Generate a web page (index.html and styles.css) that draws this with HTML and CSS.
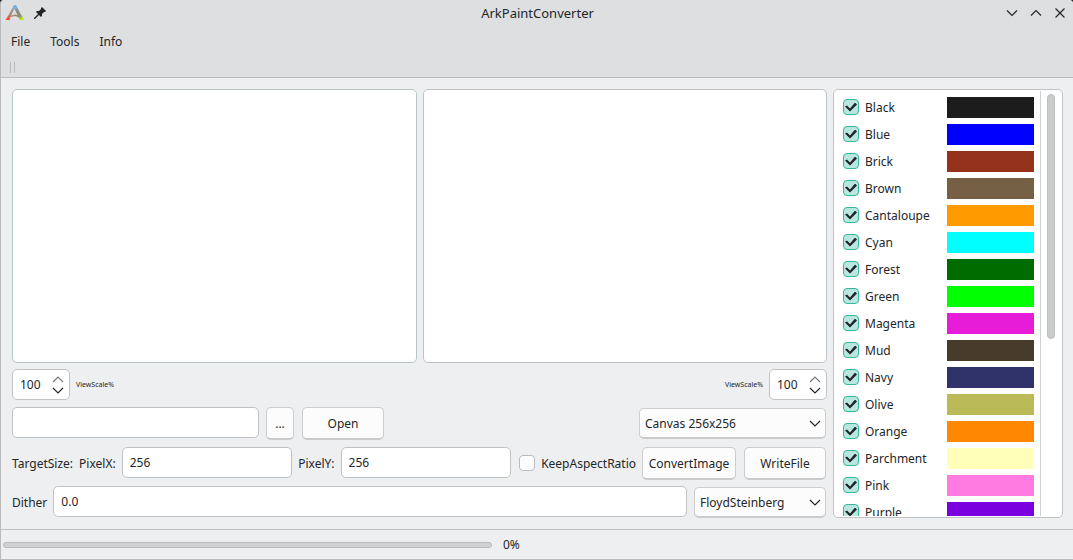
FILE: index.html
```html
<!DOCTYPE html>
<html lang="en">
<head>
<meta charset="utf-8">
<title>ArkPaintConverter</title>
<link rel="stylesheet" href="styles.css">
</head>
<body>
<div class="window">
  <header class="header">
    <div class="titlebar">
      <div class="title-icons">
        <svg class="logo" width="20" height="16" viewBox="0 0 20 16" aria-hidden="true">
          <defs>
            <linearGradient id="legLeft" gradientUnits="userSpaceOnUse" x1="10" y1="1" x2="2" y2="15"><stop offset="0" stop-color="#7db4dc"/><stop offset=".35" stop-color="#98978e"/><stop offset=".65" stop-color="#b08a70"/><stop offset=".9" stop-color="#ff4a2e"/></linearGradient>
            <linearGradient id="legRight" gradientUnits="userSpaceOnUse" x1="10" y1="1" x2="18" y2="15"><stop offset="0" stop-color="#7db4dc"/><stop offset=".35" stop-color="#8b8a80"/><stop offset=".7" stop-color="#93916a"/><stop offset=".92" stop-color="#b8f01c"/></linearGradient>
          </defs>
          <path d="M8 2h2L8 6.500 6 10.500l4-1v1.500l-4.500 1L4.500 15H.5l2.500-4z" fill="url(#legLeft)"/>
          <path d="M9 2h3l3 6 4.500 7H15l-2-3-3-1V9.500l2.500.5L9.500 4z" fill="url(#legRight)"/>
          <circle cx="10" cy="2" r="2" fill="#6fb0e4"/>
        </svg>
        <svg class="pin" width="12" height="12" viewBox="0 0 12 12" aria-hidden="true">
          <path d="M8 0l4 4-1 1-1 0-2 2 0 2-1 1-2-2-4 4-1 0 0-1 4-4-2-2 1-1 2 0 2-2 0-1z" fill="#232629"/>
        </svg>
      </div>
      <h1 class="title">ArkPaintConverter</h1>
      <div class="window-buttons">
        <button class="window-button" aria-label="Minimize"><svg width="12" height="12" viewBox="0 0 12 12"><path d="M1 3.500l5 5 5-5"/></svg></button>
        <button class="window-button" aria-label="Maximize"><svg width="12" height="12" viewBox="0 0 12 12"><path d="M1 8.500l5-5 5 5"/></svg></button>
        <button class="window-button" aria-label="Close"><svg width="12" height="12" viewBox="0 0 12 12"><path d="M1.500 1.500l9 9M10.500 1.500l-9 9"/></svg></button>
      </div>
    </div>
    <nav class="menubar">
      <button class="menu">File</button>
      <button class="menu">Tools</button>
      <button class="menu">Info</button>
    </nav>
    <div class="toolbar"><span class="grip"></span></div>
  </header>

  <main class="content">
    <div class="workspace">
      <div class="views">
        <section class="view view-source" aria-label="Source image"></section>
        <section class="view" aria-label="Converted image"></section>
      </div>
      <div class="row row-scale">
        <div class="spin">
          <input id="scale-left" type="text" inputmode="numeric" value="100">
          <span class="spin-buttons">
            <button class="step step-up" aria-label="Increase"><svg width="12" height="7" viewBox="0 0 12 7"><path d="M1 6l5-5 5 5"/></svg></button>
            <button class="step" aria-label="Decrease"><svg width="12" height="7" viewBox="0 0 12 7"><path d="M1 1l5 5 5-5"/></svg></button>
          </span>
        </div>
        <label class="scale-label" for="scale-left">ViewScale%</label>
        <span class="spacer"></span>
        <label class="scale-label" for="scale-right">ViewScale%</label>
        <div class="spin">
          <input id="scale-right" type="text" inputmode="numeric" value="100">
          <span class="spin-buttons">
            <button class="step step-up" aria-label="Increase"><svg width="12" height="7" viewBox="0 0 12 7"><path d="M1 6l5-5 5 5"/></svg></button>
            <button class="step" aria-label="Decrease"><svg width="12" height="7" viewBox="0 0 12 7"><path d="M1 1l5 5 5-5"/></svg></button>
          </span>
        </div>
      </div>
      <div class="row row-file">
        <div class="file-group">
          <input class="field" type="text" aria-label="Image path">
          <button class="button button-browse">...</button>
          <button class="button button-medium">Open</button>
        </div>
        <div class="combo combo-canvas">
          <select aria-label="Canvas"><option>Canvas 256x256</option></select>
          <svg class="chevron" width="12" height="7" viewBox="0 0 12 7"><path d="M1 1l5 5 5-5"/></svg>
        </div>
      </div>
      <div class="row row-target">
        <span class="text">TargetSize:</span>
        <label class="text" for="pixel-x">PixelX:</label>
        <input class="field" id="pixel-x" type="text" value="256">
        <label class="text" for="pixel-y">PixelY:</label>
        <input class="field" id="pixel-y" type="text" value="256">
        <label class="check keep"><input type="checkbox"><span>KeepAspectRatio</span></label>
        <div class="actions">
          <button class="button button-wide">ConvertImage</button>
          <button class="button button-medium">WriteFile</button>
        </div>
      </div>
      <div class="row row-dither">
        <label class="text" for="dither">Dither</label>
        <input class="field" id="dither" type="text" value="0.0">
        <div class="combo combo-dither">
          <select aria-label="Dither method"><option>FloydSteinberg</option></select>
          <svg class="chevron" width="12" height="7" viewBox="0 0 12 7"><path d="M1 1l5 5 5-5"/></svg>
        </div>
      </div>
    </div>

    <aside class="palette" aria-label="Colours">
      <ul class="colors">
        <li class="color"><label class="check"><input type="checkbox" checked><span>Black</span></label><i class="swatch black"></i></li>
        <li class="color"><label class="check"><input type="checkbox" checked><span>Blue</span></label><i class="swatch blue"></i></li>
        <li class="color"><label class="check"><input type="checkbox" checked><span>Brick</span></label><i class="swatch brick"></i></li>
        <li class="color"><label class="check"><input type="checkbox" checked><span>Brown</span></label><i class="swatch brown"></i></li>
        <li class="color"><label class="check"><input type="checkbox" checked><span>Cantaloupe</span></label><i class="swatch cantaloupe"></i></li>
        <li class="color"><label class="check"><input type="checkbox" checked><span>Cyan</span></label><i class="swatch cyan"></i></li>
        <li class="color"><label class="check"><input type="checkbox" checked><span>Forest</span></label><i class="swatch forest"></i></li>
        <li class="color"><label class="check"><input type="checkbox" checked><span>Green</span></label><i class="swatch green"></i></li>
        <li class="color"><label class="check"><input type="checkbox" checked><span>Magenta</span></label><i class="swatch magenta"></i></li>
        <li class="color"><label class="check"><input type="checkbox" checked><span>Mud</span></label><i class="swatch mud"></i></li>
        <li class="color"><label class="check"><input type="checkbox" checked><span>Navy</span></label><i class="swatch navy"></i></li>
        <li class="color"><label class="check"><input type="checkbox" checked><span>Olive</span></label><i class="swatch olive"></i></li>
        <li class="color"><label class="check"><input type="checkbox" checked><span>Orange</span></label><i class="swatch orange"></i></li>
        <li class="color"><label class="check"><input type="checkbox" checked><span>Parchment</span></label><i class="swatch parchment"></i></li>
        <li class="color"><label class="check"><input type="checkbox" checked><span>Pink</span></label><i class="swatch pink"></i></li>
        <li class="color"><label class="check"><input type="checkbox" checked><span>Purple</span></label><i class="swatch purple"></i></li>
      </ul>
      <div class="scrollbar"><span class="thumb"></span></div>
    </aside>
  </main>

  <footer class="statusbar">
    <progress class="progress" id="progress" value="0" max="100"></progress>
    <label for="progress">0%</label>
  </footer>
</div>
</body>
</html>
```
FILE: styles.css
```css
* {
  box-sizing: border-box;
}

body {
  margin: 0;
  background: #232629;
  color: #232629;
  font: 12px/16px "Noto Sans", sans-serif;
}

button,
input,
select {
  margin: 0;
  color: inherit;
  font: inherit;
}

.window {
  display: flex;
  flex-direction: column;
  height: 100vh;
  border: solid #b9bbbd;
  border-width: 0 0 1px 1px;
  border-radius: 4px 4px 0 0;
  background: #eeeff1;
  overflow: hidden;
}

.header {
  flex: none;
  background: #dedfe1;
  border-bottom: 1px solid #b9bbbd;
}

.titlebar {
  display: grid;
  grid-template-columns: 1fr auto 1fr;
  align-items: center;
  height: 26px;
  padding: 0 7px 0 4px;
}

.title-icons {
  display: flex;
  align-items: center;
  gap: 9px;
}

.title {
  margin: 0;
  padding-left: 4px;
  font-size: 13px;
  font-weight: 400;
}

.window-buttons {
  display: flex;
  justify-content: flex-end;
  gap: 12px;
}

.window-button,
.step {
  display: flex;
  padding: 0;
  border: 0;
  background: none;
}

.window-button path,
.step path,
.chevron path {
  fill: none;
  stroke: #232629;
  stroke-width: 1.2;
}

.menubar {
  display: flex;
  height: 30px;
  padding-left: 2px;
}

.menu {
  padding: 2px 8px 0;
  border: 0;
  background: none;
}

.menu + .menu {
  margin-left: 4px;
}

.toolbar {
  display: flex;
  height: 21px;
  padding: 6px 0 4px 9px;
}

.grip {
  width: 5px;
  border: solid #b9bbbd;
  border-width: 0 1px;
}

.content {
  display: flex;
  flex: 1;
  gap: 6px;
  min-height: 0;
  padding: 11px 10px 11px 11px;
}

.workspace {
  display: flex;
  flex: 1;
  flex-direction: column;
  min-width: 0;
}

.views {
  display: grid;
  flex: 1;
  grid-template-columns: 1fr 1fr;
  gap: 6px;
  margin-bottom: 6px;
}

.view,
.palette {
  border: 1px solid #c0c3c5;
  border-radius: 5px;
  background: #fff;
}

.view-source {
  border-color: #b8c5c5;
}

.row {
  display: flex;
  flex: none;
}

.row-scale {
  align-items: center;
  gap: 6px;
  height: 31px;
  margin-bottom: 7px;
}

.row-file {
  align-items: center;
  justify-content: space-between;
  height: 32px;
  margin-bottom: 8px;
  padding-right: 1px;
}

.row-target {
  align-items: center;
  gap: 6px;
  height: 32px;
  margin-bottom: 7px;
  padding-right: 1px;
}

.row-dither {
  align-items: center;
  gap: 6px;
  height: 32px;
  padding-right: 1px;
}

.row-dither .combo {
  margin-left: 1px;
}

.spacer {
  flex: 1;
}

.text,
.check span {
  padding-top: 2px;
}

.field,
.spin {
  height: 31px;
  border: 1px solid #c0c3c5;
  border-radius: 5px;
  background: #fff;
}

.field {
  flex: 1;
  align-self: flex-start;
  min-width: 0;
  padding: 0 7px;
}

.spin {
  display: flex;
  align-items: center;
  width: 58px;
}

.spin input {
  width: 39px;
  padding: 0 0 0 7px;
  border: 0;
  background: none;
}

.spin-buttons {
  display: flex;
  flex-direction: column;
  gap: 4px;
}

.step-up path {
  stroke: #777a7d;
}

.scale-label {
  font-size: 7px;
}

.file-group {
  display: flex;
  width: 372px;
}

.file-group .field {
  margin-right: 7px;
}

.button {
  height: 33px;
  padding: 2px 0 0;
  border: 1px solid #cbcdcf;
  border-bottom: 2px solid #c8cacc;
  border-radius: 5px;
  background: #fcfcfc;
}

.button-browse {
  width: 28px;
  margin-right: 8px;
}

.button-medium {
  width: 82px;
}

.button-wide {
  width: 94px;
}

.actions {
  display: flex;
  gap: 8px;
}

.combo {
  display: grid;
  align-items: center;
  height: 31px;
}

.combo select {
  grid-area: 1 / 1;
  width: 100%;
  height: 31px;
  padding: 2px 24px 0 5px;
  appearance: none;
  border: 1px solid #cbcdcf;
  border-bottom: 2px solid #c8cacc;
  border-radius: 5px;
  background: #fcfcfc;
}

.chevron {
  grid-area: 1 / 1;
  justify-self: end;
  margin-right: 5px;
  pointer-events: none;
}

.combo-canvas {
  width: 187px;
}

.combo-dither {
  width: 132px;
}

.check {
  display: flex;
  align-items: center;
  gap: 6px;
  height: 20px;
}

.keep {
  margin-left: 2px;
}

.check input {
  display: grid;
  place-content: center;
  width: 16px;
  height: 16px;
  appearance: none;
  border: 1px solid #b9bcbe;
  border-radius: 4px;
  background: #fcfcfc;
}

.check input:checked {
  border-color: #35b89c;
  background: #bae7dd;
}

.check input:checked::before {
  width: 12px;
  height: 9px;
  background: #232629;
  clip-path: polygon(0 4px, 2px 3px, 5px 6px, 10px 0, 12px 2px, 5px 9px);
  content: "";
}

.palette {
  display: flex;
  width: 230px;
  padding: 1px 0;
}

.colors {
  flex: 1;
  margin: 0;
  padding: 6px 6px 0 9px;
  list-style: none;
  overflow: hidden;
}

.color {
  display: grid;
  grid-template-columns: 1fr 87px;
  height: 21px;
  margin-bottom: 6px;
}

.scrollbar {
  width: 22px;
  padding: 3px 7px 0 6px;
  border-left: 1px solid #cfd1d2;
}

.thumb {
  display: block;
  height: 58%;
  border: 1px solid #bcbebf;
  border-radius: 4px;
  background: #cacbcb;
}

.black { background: #1c1c1c; }
.blue { background: #0000ff; }
.brick { background: #94321c; }
.brown { background: #756046; }
.cantaloupe { background: #ff9a00; }
.cyan { background: #00ffff; }
.forest { background: #006c00; }
.green { background: #00ff00; }
.magenta { background: #e71cd9; }
.mud { background: #473b2b; }
.navy { background: #30336a; }
.olive { background: #baba59; }
.orange { background: #ff8800; }
.parchment { background: #ffffba; }
.pink { background: #ff7be1; }
.purple { background: #7b00e0; }

.statusbar {
  display: grid;
  flex: none;
  grid-template-columns: 489fr 570fr;
  align-items: center;
  gap: 11px;
  height: 30px;
  padding-left: 2px;
  border-top: 1px solid #c0c3c5;
}

.progress {
  width: 100%;
  height: 6px;
  appearance: none;
  border: 1px solid #b9bbbd;
  border-radius: 3px;
  background: #d0d2d4;
}

.progress::-webkit-progress-bar {
  background: transparent;
}
```
